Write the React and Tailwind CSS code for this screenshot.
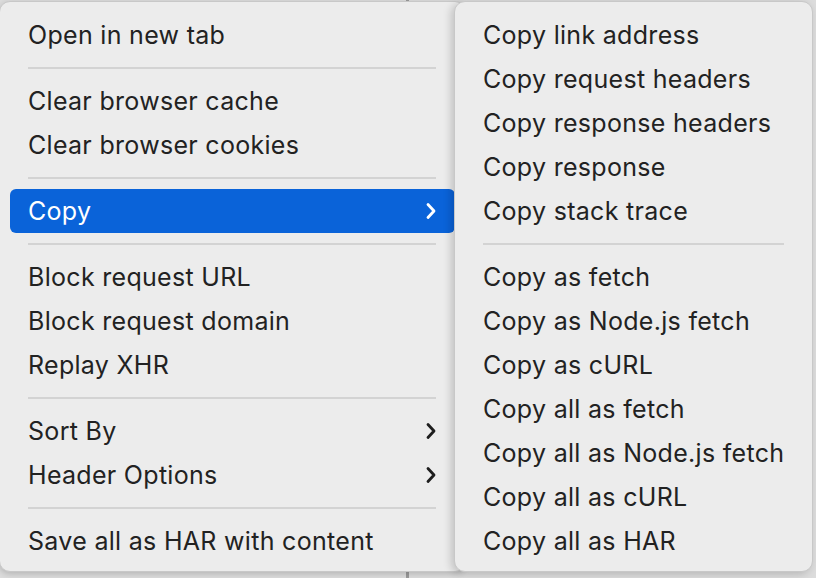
import { Fragment } from 'react'

// ── Menu data ─────────────────────────────────────────────────────────────────
const MAIN_MENU = [
  [{ label: 'Open in new tab' }],
  [{ label: 'Clear browser cache' }, { label: 'Clear browser cookies' }],
  [{ label: 'Copy', submenu: true, active: true }],
  [{ label: 'Block request URL' }, { label: 'Block request domain' }, { label: 'Replay XHR' }],
  [{ label: 'Sort By', submenu: true }, { label: 'Header Options', submenu: true }],
  [{ label: 'Save all as HAR with content' }],
]

const COPY_MENU = [
  [
    { label: 'Copy link address' },
    { label: 'Copy request headers' },
    { label: 'Copy response headers' },
    { label: 'Copy response' },
    { label: 'Copy stack trace' },
  ],
  [
    { label: 'Copy as fetch' },
    { label: 'Copy as Node.js fetch' },
    { label: 'Copy as cURL' },
    { label: 'Copy all as fetch' },
    { label: 'Copy all as Node.js fetch' },
    { label: 'Copy all as cURL' },
    { label: 'Copy all as HAR' },
  ],
]

function Chevron({ className }) {
  return (
    <svg className={className} width="12" height="18" viewBox="0 0 12 18" fill="none">
      <path d="M3 2.5 L9 9 L3 15.5" stroke="currentColor" strokeWidth="2.8" strokeLinecap="round" strokeLinejoin="round" />
    </svg>
  )
}

function MenuItem({ item }) {
  return (
    <div
      className={`h-11 flex items-center justify-between pl-[18px] pr-[18px] rounded-[6px] whitespace-nowrap ${
        item.active ? 'bg-[#0a63d9] text-white' : 'text-[#222222]'
      }`}
    >
      <span>{item.label}</span>
      {item.submenu && <Chevron className={item.active ? 'text-white' : 'text-[#1e1e1e]'} />}
    </div>
  )
}

function Menu({ groups, className, sepClass }) {
  return (
    <div className={className}>
      {groups.map((group, gi) => (
        <Fragment key={gi}>
          {gi > 0 && (
            <div className="h-[22px] flex items-center">
              <div className={`h-[2px] bg-[#d3d3d3] ${sepClass}`} />
            </div>
          )}
          {group.map((item) => (
            <MenuItem key={item.label} item={item} />
          ))}
        </Fragment>
      ))}
    </div>
  )
}

// ── Root ──────────────────────────────────────────────────────────────────────
export default function App() {
  return (
    <div
      className="w-[816px] h-[578px] overflow-hidden bg-[#dcdcdc] relative text-[25px] tracking-[0.3px] leading-none"
      style={{ fontFamily: 'Inter, "Noto Sans", sans-serif' }}
    >
      {/* page behind the menus */}
      <div className="absolute left-[406px] top-0 w-[3px] h-full bg-[#9a9a9a]" />

      <div className="relative flex pt-[1px] -ml-[1px]">
        {/* main context menu */}
        <Menu
          groups={MAIN_MENU}
          className="w-[467px] h-[571px] bg-[#ececec] rounded-[11px] border border-[#c8c8c8] pl-[10px] pr-[10px] pt-[11px] shadow-[0_2px_6px_rgba(0,0,0,0.18)]"
          sepClass="ml-[18px] w-[408px]"
        />

        {/* Copy submenu */}
        <Menu
          groups={COPY_MENU}
          className="-ml-[12px] w-[359px] h-[571px] bg-[#ececec] rounded-[11px] border border-[#c8c8c8] px-[10px] pt-[11px] shadow-[-3px_2px_8px_rgba(0,0,0,0.18)]"
          sepClass="ml-[18px] w-[301px]"
        />
      </div>
    </div>
  )
}
